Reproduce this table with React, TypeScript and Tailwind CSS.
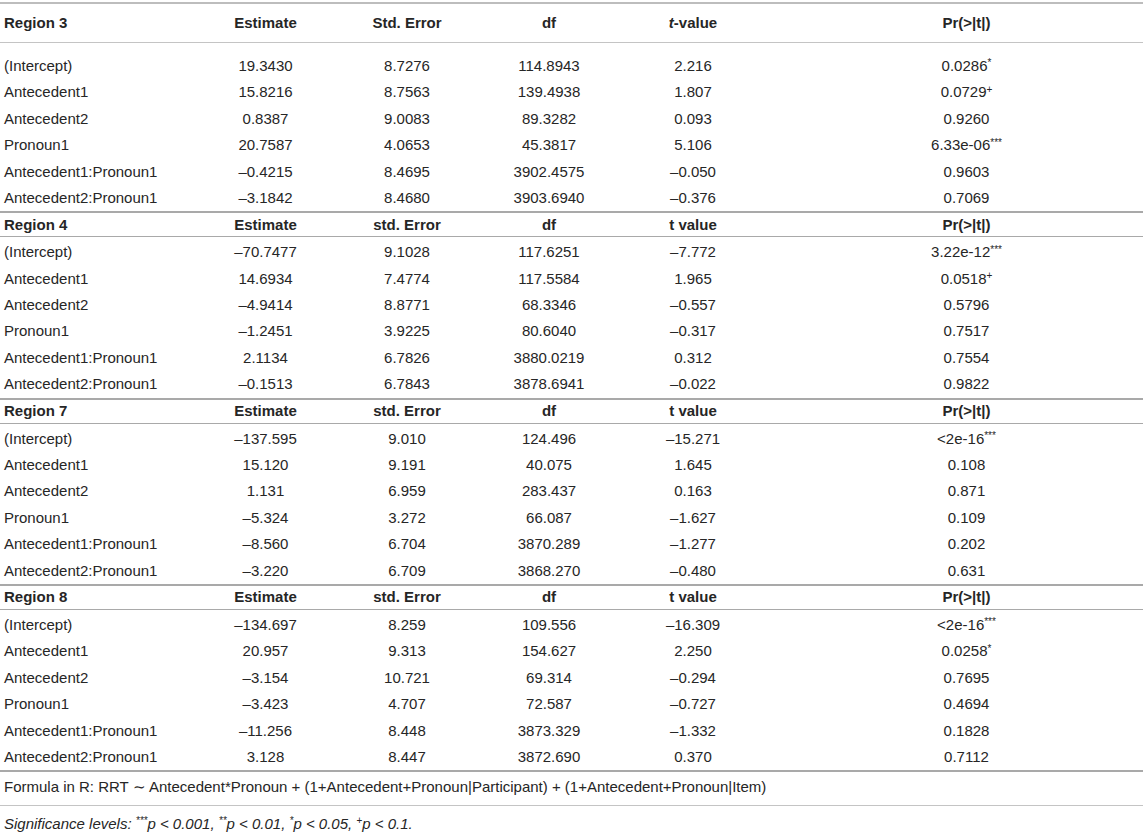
type Row = [string, string, string, string, string, string, string?]

type Section = {
  title: string
  head: [string, string, string, string, string]
  rows: Row[]
}

const sections: Section[] = [
  {
    title: 'Region 3',
    head: ['Estimate', 'Std. Error', 'df', 't-value', 'Pr(>|t|)'],
    rows: [
      ['(Intercept)', '19.3430', '8.7276', '114.8943', '2.216', '0.0286', '*'],
      ['Antecedent1', '15.8216', '8.7563', '139.4938', '1.807', '0.0729', '+'],
      ['Antecedent2', '0.8387', '9.0083', '89.3282', '0.093', '0.9260'],
      ['Pronoun1', '20.7587', '4.0653', '45.3817', '5.106', '6.33e-06', '***'],
      ['Antecedent1:Pronoun1', '–0.4215', '8.4695', '3902.4575', '–0.050', '0.9603'],
      ['Antecedent2:Pronoun1', '–3.1842', '8.4680', '3903.6940', '–0.376', '0.7069'],
    ],
  },
  {
    title: 'Region 4',
    head: ['Estimate', 'std. Error', 'df', 't value', 'Pr(>|t|)'],
    rows: [
      ['(Intercept)', '–70.7477', '9.1028', '117.6251', '–7.772', '3.22e-12', '***'],
      ['Antecedent1', '14.6934', '7.4774', '117.5584', '1.965', '0.0518', '+'],
      ['Antecedent2', '–4.9414', '8.8771', '68.3346', '–0.557', '0.5796'],
      ['Pronoun1', '–1.2451', '3.9225', '80.6040', '–0.317', '0.7517'],
      ['Antecedent1:Pronoun1', '2.1134', '6.7826', '3880.0219', '0.312', '0.7554'],
      ['Antecedent2:Pronoun1', '–0.1513', '6.7843', '3878.6941', '–0.022', '0.9822'],
    ],
  },
  {
    title: 'Region 7',
    head: ['Estimate', 'std. Error', 'df', 't value', 'Pr(>|t|)'],
    rows: [
      ['(Intercept)', '–137.595', '9.010', '124.496', '–15.271', '<2e-16', '***'],
      ['Antecedent1', '15.120', '9.191', '40.075', '1.645', '0.108'],
      ['Antecedent2', '1.131', '6.959', '283.437', '0.163', '0.871'],
      ['Pronoun1', '–5.324', '3.272', '66.087', '–1.627', '0.109'],
      ['Antecedent1:Pronoun1', '–8.560', '6.704', '3870.289', '–1.277', '0.202'],
      ['Antecedent2:Pronoun1', '–3.220', '6.709', '3868.270', '–0.480', '0.631'],
    ],
  },
  {
    title: 'Region 8',
    head: ['Estimate', 'std. Error', 'df', 't value', 'Pr(>|t|)'],
    rows: [
      ['(Intercept)', '–134.697', '8.259', '109.556', '–16.309', '<2e-16', '***'],
      ['Antecedent1', '20.957', '9.313', '154.627', '2.250', '0.0258', '*'],
      ['Antecedent2', '–3.154', '10.721', '69.314', '–0.294', '0.7695'],
      ['Pronoun1', '–3.423', '4.707', '72.587', '–0.727', '0.4694'],
      ['Antecedent1:Pronoun1', '–11.256', '8.448', '3873.329', '–1.332', '0.1828'],
      ['Antecedent2:Pronoun1', '3.128', '8.447', '3872.690', '0.370', '0.7112'],
    ],
  },
]

const grid = 'grid grid-cols-[195px_141px_142px_142px_146px_1fr] items-center'

function Head({ s, first }: { s: Section; first: boolean }) {
  return (
    <div
      className={`${grid} font-bold border-t-2 border-b border-[#a9a9a9] ${
        first ? 'h-[41px] border-t-[#bdbdbd] border-b-[#c4c4c4]' : 'h-[26px]'
      }`}
    >
      <div className="pl-[4px]">{s.title}</div>
      {s.head.map((h, i) => (
        <div key={i} className={`text-center ${i === 4 ? 'pl-[24px]' : ''}`}>
          {h === 't-value' ? (
            <>
              <i>t</i>-value
            </>
          ) : (
            h
          )}
        </div>
      ))}
    </div>
  )
}

function Body({ rows, first }: { rows: Row[]; first: boolean }) {
  return (
    <div className={first ? 'pt-[10px]' : 'pt-[2px]'}>
      {rows.map((r, i) => (
        <div key={i} className={`${grid} h-[26.4px]`}>
          <div className="pl-[4px] whitespace-nowrap">{r[0]}</div>
          <div className="text-center">{r[1]}</div>
          <div className="text-center">{r[2]}</div>
          <div className="text-center">{r[3]}</div>
          <div className="text-center">{r[4]}</div>
          <div className="text-center pl-[24px]">
            {r[5]}
            {r[6] && <sup className="text-[10px] -top-[0.45em]">{r[6]}</sup>}
          </div>
        </div>
      ))}
    </div>
  )
}

export default function App() {
  return (
    <div className="w-[1143px] h-[835px] bg-white overflow-hidden font-['Liberation_Sans',Arial,sans-serif] text-[15px] text-[#262626]">
      <div className="pt-[2px]">
        {sections.map((s, i) => (
          <div key={s.title}>
            <Head s={s} first={i === 0} />
            <Body rows={s.rows} first={i === 0} />
          </div>
        ))}
        <div className="border-t-2 border-[#a9a9a9] border-b border-b-[#c4c4c4] h-[36px] pl-[4px] pt-[4px]">
          Formula in R: RRT ∼ Antecedent*Pronoun + (1+Antecedent+Pronoun|Participant) +
          (1+Antecedent+Pronoun|Item)
        </div>
        <div className="pl-[4px] pt-[7px] italic text-[15px]">
          Significance levels: <sup className="text-[10px]">***</sup>p &lt; 0.001,{' '}
          <sup className="text-[10px]">**</sup>p &lt; 0.01, <sup className="text-[10px]">*</sup>p &lt; 0.05,{' '}
          <sup className="text-[10px] not-italic">+</sup>p &lt; 0.1.
        </div>
      </div>
    </div>
  )
}
